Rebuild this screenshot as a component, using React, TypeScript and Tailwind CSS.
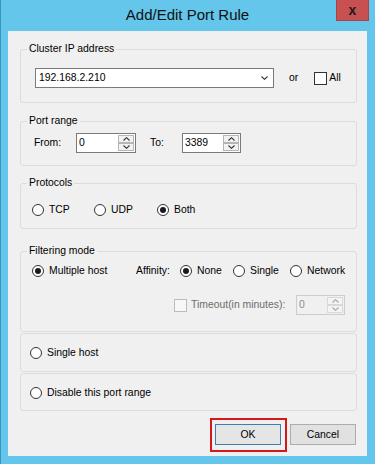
import React from "react";

function Chevron({ up, className }: { up?: boolean; className?: string }) {
  return (
    <svg width="7" height="4" viewBox="0 0 7 4" className={className}>
      {up ? (
        <path d="M0.5 3.5 L3.5 0.7 L6.5 3.5" fill="none" stroke="#333" strokeWidth="1.1" />
      ) : (
        <path d="M0.5 0.5 L3.5 3.3 L6.5 0.5" fill="none" stroke="#333" strokeWidth="1.1" />
      )}
    </svg>
  );
}

function Radio({ checked, label, className }: { checked?: boolean; label: string; className?: string }) {
  return (
    <div className={"flex items-center h-[14px] " + (className ?? "")}>
      <span className="w-[12px] h-[12px] rounded-full border border-[#333333] bg-white flex items-center justify-center shrink-0">
        {checked && <span className="w-[6px] h-[6px] rounded-full bg-[#1a1a1a]" />}
      </span>
      <span className="ml-[5px] whitespace-nowrap">{label}</span>
    </div>
  );
}

function Spin({ value, width, disabled }: { value: string; width: string; disabled?: boolean }) {
  return (
    <div
      className={
        "flex h-[20px] border " +
        width +
        " " +
        (disabled ? "border-[#cccccc] bg-[#f0f0f0] text-[#8d8d8d]" : "border-[#7a7a7a] bg-white text-black")
      }
    >
      <div className="flex-1 flex items-center pl-[2px]">{value}</div>
      <div className="w-[17px] flex flex-col justify-between py-[1px] pr-[1px]">
        <div
          className={
            "h-[8.5px] border flex items-center justify-center " +
            (disabled ? "border-[#d9d9d9] bg-[#f4f4f4]" : "border-[#b5b5b5] bg-[#f2f2f2]")
          }
        >
          <Chevron up className={disabled ? "opacity-40" : ""} />
        </div>
        <div
          className={
            "h-[8.5px] border flex items-center justify-center " +
            (disabled ? "border-[#d9d9d9] bg-[#f4f4f4]" : "border-[#b5b5b5] bg-[#f2f2f2]")
          }
        >
          <Chevron className={disabled ? "opacity-40" : ""} />
        </div>
      </div>
    </div>
  );
}

export default function App() {
  return (
    <div className="relative w-[375px] h-[464px] bg-[#63c6ea] border-l border-[#3b95c4] overflow-hidden font-['Liberation_Sans',Arial,sans-serif] text-[10.4px] text-black leading-[12px]">
      {/* Title bar */}
      <div className="flex h-[31px]">
        <div className="w-[38px]" />
        <div className="flex-1 flex items-center justify-center text-[15px] text-[#111] pb-[1px]">
          Add/Edit Port Rule
        </div>
        <div className="w-[39px] flex justify-start">
          <div className="w-[33px] h-[21px] bg-[#c75050] border border-[#a94444] border-t-0 flex items-center justify-center">
            <span className="text-[14px] font-bold text-[#1b1b1b] leading-[14px] -mt-[1px]">x</span>
          </div>
        </div>
      </div>

      {/* Client area */}
      <div className="ml-[7px] mr-[8px] h-[425px] bg-[#f0f0f0] flex flex-col">
        {/* Cluster IP */}
        <fieldset className="mt-[12px] ml-[12px] mr-[10px] border border-[#dcdcdc] rounded-[3px] p-0">
          <legend className="ml-[6px] px-[2px]">Cluster IP address</legend>
          <div className="flex items-center pl-[14px] pt-[13px] pb-[14px]">
            <div className="w-[239px] h-[20px] border border-[#7a7a7a] bg-white flex items-center justify-between pl-[3px] pr-[5px]">
              <span>192.168.2.210</span>
              <Chevron />
            </div>
            <span className="ml-[15px]">or</span>
            <span className="ml-[16px] w-[13px] h-[13px] border border-[#333333] bg-white" />
            <span className="ml-[2px]">All</span>
          </div>
        </fieldset>

        {/* Port range */}
        <fieldset className="mt-[12px] ml-[12px] mr-[10px] border border-[#dcdcdc] rounded-[3px] p-0">
          <legend className="ml-[6px] px-[2px]">Port range</legend>
          <div className="flex items-center pl-[13px] pt-[6px] pb-[12px]">
            <span className="w-[42px]">From:</span>
            <Spin value="0" width="w-[60px]" />
            <span className="ml-[14px] w-[32px]">To:</span>
            <Spin value="3389" width="w-[59px]" />
          </div>
        </fieldset>

        {/* Protocols */}
        <fieldset className="mt-[11px] ml-[12px] mr-[10px] border border-[#dcdcdc] rounded-[3px] p-0">
          <legend className="ml-[6px] px-[2px]">Protocols</legend>
          <div className="flex items-center pl-[11px] pt-[14px] pb-[11px]">
            <Radio label="TCP" className="w-[62px]" />
            <Radio label="UDP" className="w-[63px]" />
            <Radio label="Both" checked />
          </div>
        </fieldset>

        {/* Filtering mode */}
        <fieldset className="mt-[16px] ml-[12px] mr-[10px] border border-[#dcdcdc] rounded-[3px] p-0">
          <legend className="ml-[6px] px-[2px]">Filtering mode</legend>
          <div className="pl-[11px] pt-[7px] pb-[16px]">
            <div className="flex items-center">
              <Radio label="Multiple host" checked className="w-[104px]" />
              <span className="w-[44px]">Affinity:</span>
              <Radio label="None" checked className="w-[53px]" />
              <Radio label="Single" className="w-[57px]" />
              <Radio label="Network" />
            </div>
            <div className="flex items-center mt-[17px] ml-[142px]">
              <span className="w-[13px] h-[13px] border border-[#bcbcbc] bg-[#f7f7f7]" />
              <span className="ml-[4px] w-[105px] text-[#6d6d6d]">Timeout(in minutes):</span>
              <Spin value="0" width="w-[49px]" disabled />
            </div>
          </div>
        </fieldset>

        {/* Single host */}
        <div className="mt-[1px] ml-[12px] mr-[10px] border border-[#dcdcdc] rounded-[3px] pl-[9px] pt-[12px] pb-[11px]">
          <Radio label="Single host" />
        </div>

        {/* Disable */}
        <div className="mt-[1px] ml-[12px] mr-[10px] border border-[#dcdcdc] rounded-[3px] pl-[9px] pt-[12px] pb-[10px]">
          <Radio label="Disable this port range" />
        </div>

        {/* Buttons */}
        <div className="mt-[7px] flex justify-end items-start mr-[11px]">
          <div className="border-2 border-[#d3191c] pt-[4px] pb-[5px] pl-[3px] pr-[4px]">
            <button className="w-[66px] h-[21px] border border-[#3c7fb1] bg-[#e5e5e5] text-[10.4px] leading-[12px] flex items-center justify-center">
              OK
            </button>
          </div>
          <button className="ml-[3px] mt-[6px] w-[66px] h-[21px] border border-[#adadad] bg-[#e1e1e1] text-[10.4px] leading-[12px] flex items-center justify-center">
            Cancel
          </button>
        </div>
      </div>
    </div>
  );
}
